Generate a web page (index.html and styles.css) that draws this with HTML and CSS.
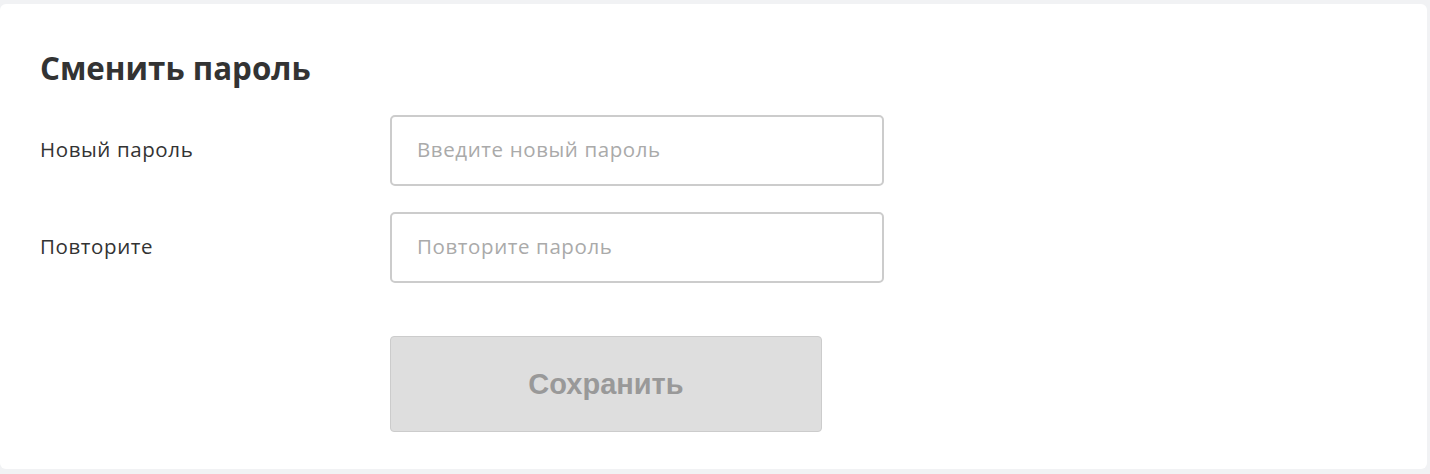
FILE: index.html
```html
<!DOCTYPE html>
<html lang="ru">
<head>
<meta charset="utf-8">
<title>Сменить пароль</title>
<link rel="stylesheet" href="styles.css">
</head>
<body>
<section class="card">
  <h2 class="title">Сменить пароль</h2>
  <form class="form">
    <label class="label" for="p1">Новый пароль</label>
    <input class="input" id="p1" type="password" placeholder="Введите новый пароль">
    <label class="label" for="p2">Повторите</label>
    <input class="input" id="p2" type="password" placeholder="Повторите пароль">
    <div class="actions">
      <button class="btn" type="button" disabled>Сохранить</button>
    </div>
  </form>
</section>
</body>
</html>
```
FILE: styles.css
```css
html, body {
  margin: 0;
  padding: 0;
  background: #f1f2f4;
}
body {
  padding: 4px 3px 5px 0;
  font-family: "Open Sans", "Noto Sans", sans-serif;
  color: #333;
}
.card {
  background: #fff;
  border-radius: 6px;
  height: 465px;
  box-sizing: border-box;
  padding: 44px 40px 38px 40px;
}
.title {
  margin: 0;
  font-size: 31.3px;
  line-height: 40px;
  font-weight: 700;
  color: #333;
  height: 67px;
}
.form {
  display: grid;
  grid-template-columns: 350px 494px;
  grid-auto-rows: 71px;
  row-gap: 26px;
  align-items: center;
}
.label {
  font-size: 20.5px;
  letter-spacing: 0.6px;
  color: #333;
  margin-bottom: 3px;
}
.input {
  box-sizing: border-box;
  width: 494px;
  height: 71px;
  border: 2px solid #ccc;
  border-radius: 5px;
  padding: 0 25px 3px 25px;
  font-family: inherit;
  font-size: 20.5px;
  letter-spacing: 0.6px;
  color: #333;
  outline: none;
}
.input::placeholder {
  color: #aaa;
}
.actions {
  grid-column: 2;
  margin-top: 27px;
  height: 96px;
  align-self: start;
}
.btn {
  display: block;
  width: 432px;
  height: 96px;
  background: #dedede;
  border: 1px solid #ccc;
  border-radius: 4px;
  font-family: "Liberation Sans", Arial, sans-serif;
  font-weight: 700;
  font-size: 29px;
  color: #999;
  cursor: default;
}
```
